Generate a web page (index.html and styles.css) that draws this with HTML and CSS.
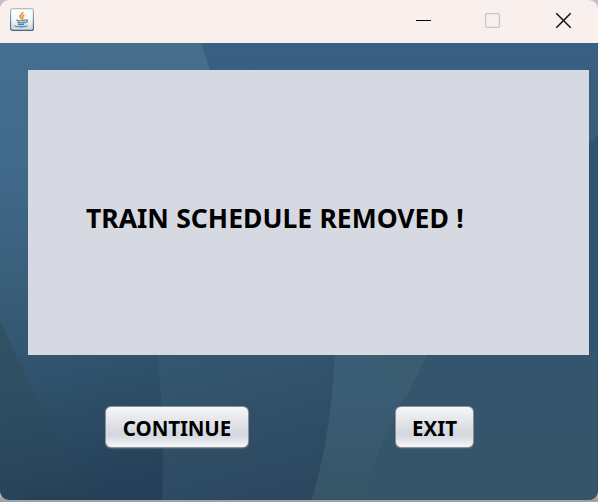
FILE: index.html
```html
<!DOCTYPE html>
<html lang="en">
<head>
<meta charset="utf-8">
<title>Train Schedule</title>
<link rel="stylesheet" href="styles.css">
</head>
<body>
<div class="window">
  <header class="titlebar">
    <svg class="app-icon" width="24" height="24" viewBox="0 0 24 24">
      <defs><linearGradient id="tile" x1="0" y1="0" x2="0" y2="1"><stop offset="0" stop-color="#fff"/><stop offset=".5" stop-color="#f6f8f9"/><stop offset="1" stop-color="#c9d4dc"/></linearGradient>
      <linearGradient id="edge" x1="0" y1="0" x2="0" y2="1"><stop offset="0" stop-color="#a9bdca"/><stop offset="1" stop-color="#456782"/></linearGradient></defs>
      <rect x=".6" y=".6" width="22.8" height="21.8" rx="2" fill="url(#tile)" stroke="url(#edge)" stroke-width="1.2"/>
      <path d="M12.8 4c1 1.8-3.5 2.8-2.8 4.7.3 1 1.5 1.4 1.4 2.7M14.3 7.2c-2 .9-2.5 1.7-1.6 2.6.5.6.2 1.2-.3 1.7" fill="none" stroke="#ec872f" stroke-width="1.5"/>
      <path d="M6.3 12.2c2.5.6 6.5.6 9.2 0M7.3 14.3c2.4.6 5.4.6 7.6 0M8 16.3c2 .5 4.3.5 6.2 0M15.7 12c2.5-.6 2.3 2-.5 2.8M4.5 17.7c1.500 1.500 10.500 1.600 13 .1" fill="none" stroke="#54809f" stroke-width="1.2"/>
    </svg>
    <svg class="controls" width="160" height="20" viewBox="0 0 160 20" fill="none">
      <path d="M0 9.500h15" stroke="#000"/>
      <rect x="69.600" y="2.600" width="13.800" height="13.800" rx="1.500" stroke="#cac3c2" stroke-width="1.300"/>
      <path d="M140.300 2.300l14.400 14.400M154.700 2.300l-14.400 14.400" stroke="#111" stroke-width="1.500"/>
    </svg>
  </header>
  <main class="content">
    <svg class="backdrop" width="598" height="457" viewBox="0 43 598 457">
      <defs>
        <linearGradient id="left" gradientUnits="userSpaceOnUse" x1="60" y1="43" x2="160" y2="490"><stop offset="0" stop-color="#466e8e"/><stop offset=".25" stop-color="#41698a"/><stop offset=".5" stop-color="#395e7a"/><stop offset=".72" stop-color="#2f516b"/><stop offset="1" stop-color="#243f57"/></linearGradient>
        <linearGradient id="mid" gradientUnits="userSpaceOnUse" x1="225" y1="345" x2="265" y2="500"><stop offset="0" stop-color="#34576f"/><stop offset="1" stop-color="#2b4860"/></linearGradient>
        <linearGradient id="right" x1="0" y1="0" x2="0" y2="1"><stop offset="0" stop-color="#3a5f80"/><stop offset=".2" stop-color="#395c7c"/><stop offset=".5" stop-color="#31556f"/><stop offset="1" stop-color="#355569"/></linearGradient>
        <linearGradient id="band" gradientUnits="userSpaceOnUse" x1="350" y1="350" x2="350" y2="500"><stop offset="0" stop-color="#3b5e75"/><stop offset=".3" stop-color="#3a5c75"/><stop offset="1" stop-color="#365668"/></linearGradient>
        <linearGradient id="fade" gradientUnits="userSpaceOnUse" x1="0" y1="355" x2="0" y2="500"><stop offset="0" stop-color="#34556e"/><stop offset="1" stop-color="#355569"/></linearGradient>
        <linearGradient id="shade" gradientUnits="userSpaceOnUse" x1="0" y1="320" x2="0" y2="500"><stop offset="0" stop-color="#2d4d57" stop-opacity=".6"/><stop offset="1" stop-color="#2a4656" stop-opacity=".12"/></linearGradient>
      </defs>
      <path fill="url(#left)" d="M0 43h340v457H0z"/>
      <path fill="#4a7290" opacity=".35" d="M81 43h121l9 27H90z"/>
      <path fill="url(#right)" d="M201 43h397v457H320L335 350 210 70z"/>
      <path fill="#2f5470" d="M598 135L560 173v190h38z"/>
      <path fill="url(#shade)" d="M0 320Q42 415 96 500H0z"/>
      <path fill="url(#mid)" d="M157 350Q166 430 162 500h150Q333 430 335 350z"/>
      <path fill="url(#band)" d="M335 350Q332 430 312 500h56Q373 445 430 350z"/>
      <path fill="url(#fade)" d="M430 350Q373 445 365 500h233V350z"/>
      <path fill="#3a5e70" d="M373 350h57l-24 47Q390 378 373 350z"/>
    </svg>
    <section class="panel"><h1 class="message">TRAIN SCHEDULE REMOVED !</h1></section>
    <div class="actions">
      <button class="button continue">CONTINUE</button>
      <button class="button exit">EXIT</button>
    </div>
  </main>
</div>
</body>
</html>
```

FILE: styles.css
```css
* {
  box-sizing: border-box;
}

body {
  margin: 0;
  width: 598px;
  height: 502px;
  overflow: hidden;
  background: linear-gradient(#c5c2c4 0 490px, #a2a2a4 500px);
  font-family: "Noto Sans", "Open Sans", sans-serif;
}

.window {
  height: 500px;
  overflow: hidden;
  border-radius: 9px;
}

.titlebar {
  display: flex;
  justify-content: space-between;
  align-items: flex-start;
  height: 43px;
  padding: 8px 22px 0 10px;
  background: #f9f0ee;
}

.controls {
  margin-top: 3px;
}

.content {
  position: relative;
  height: 457px;
  padding: 27px 9px 0 28px;
}

.backdrop {
  position: absolute;
  inset: 0;
}

.panel {
  position: relative;
  display: flex;
  align-items: center;
  height: 285px;
  padding: 10px 0 0 58px;
  background: #d6d9e1;
}

.message {
  margin: 0;
  color: #000;
  font-size: 26.5px;
  line-height: 36px;
  font-weight: 700;
  letter-spacing: 0;
  word-spacing: 0.5px;
  white-space: nowrap;
}

.actions {
  position: relative;
  display: flex;
  gap: 146px;
  margin: 51px 0 0 77px;
}

.button {
  height: 42px;
  padding: 2px 0 0;
  border: 1px solid #8b9096;
  border-radius: 6px;
  background: linear-gradient(#f7f7f9, #e4e5e9 35%, #d4d7df 68%, #d9dce3 76%, #f5f6f9);
  box-shadow: 0 1px 1px #56606a;
  color: #000;
  font: 700 20.5px "Noto Sans", "Open Sans", sans-serif;
  white-space: nowrap;
}

.continue {
  width: 144px;
  letter-spacing: -0.1px;
}

.exit {
  width: 79px;
}
```
